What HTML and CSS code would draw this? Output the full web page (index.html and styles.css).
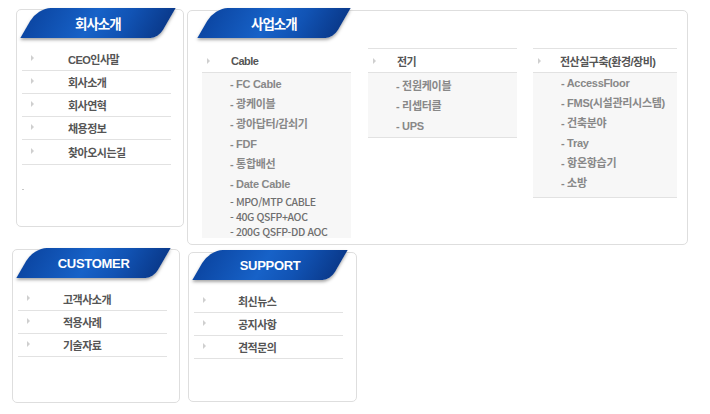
FILE: index.html
```html
<!DOCTYPE html>
<html lang="ko">

<head>
    <meta charset="UTF-8">
    <title>사이트맵</title>
    <link rel="stylesheet" href="styles.css">
</head>

<body>

    <div class="row row-top">
        <section class="box box-company">
            <div class="tab"><span>회사소개</span></div>
            <ul class="menu">
                <li><i class="arrow"></i>CEO인사말</li>
                <li><i class="arrow"></i>회사소개</li>
                <li><i class="arrow"></i>회사연혁</li>
                <li><i class="arrow"></i>채용정보</li>
                <li class="last"><i class="arrow"></i>찾아오시는길</li>
            </ul>
            <div class="dot"></div>
        </section>

        <section class="box box-business">
            <div class="tab tab-business"><span>사업소개</span></div>
            <div class="cols">
                <div class="col col-cable">
                    <div class="col-head no-top"><i class="arrow"></i>Cable</div>
                    <ul class="sub">
                        <li>- FC Cable</li>
                        <li>- 광케이블</li>
                        <li>- 광아답터/감쇠기</li>
                        <li>- FDF</li>
                        <li>- 통합배선</li>
                        <li>- Date Cable</li>
                        <li class="small">- MPO/MTP CABLE</li>
                        <li class="small">- 40G QSFP+AOC</li>
                        <li class="small">- 200G QSFP-DD AOC</li>
                    </ul>
                </div>
                <div class="col col-power">
                    <div class="col-head"><i class="arrow"></i>전기</div>
                    <ul class="sub">
                        <li>- 전원케이블</li>
                        <li>- 리셉터클</li>
                        <li>- UPS</li>
                    </ul>
                </div>
                <div class="col col-room">
                    <div class="col-head"><i class="arrow"></i>전산실구축(환경/장비)</div>
                    <ul class="sub">
                        <li>- AccessFloor</li>
                        <li>- FMS(시설관리시스템)</li>
                        <li>- 건축분야</li>
                        <li>- Tray</li>
                        <li>- 항온항습기</li>
                        <li>- 소방</li>
                    </ul>
                </div>
            </div>
        </section>
    </div>

    <div class="row row-bottom">
        <section class="box box-customer">
            <div class="tab"><span class="en">CUSTOMER</span></div>
            <ul class="menu">
                <li><i class="arrow"></i>고객사소개</li>
                <li><i class="arrow"></i>적용사례</li>
                <li><i class="arrow"></i>기술자료</li>
            </ul>
        </section>

        <section class="box box-support">
            <div class="tab"><span class="en">SUPPORT</span></div>
            <ul class="menu">
                <li><i class="arrow"></i>최신뉴스</li>
                <li><i class="arrow"></i>공지사항</li>
                <li><i class="arrow"></i>견적문의</li>
            </ul>
        </section>
    </div>

</body>

</html>
```

FILE: styles.css
```css
body {
    margin: 0;
    padding: 0;
    background-color: #fff;
    font-family: "Liberation Sans", "Noto Sans CJK KR", sans-serif;
    color: #555;
}

ul {
    list-style: none;
    margin: 0;
    padding: 0;
}

.row {
    display: flex;
    align-items: flex-start;
}

.row-top {
    padding-top: 9px;
}

.box {
    box-sizing: border-box;
    border: 1px solid #dedede;
    border-radius: 5px;
    background-color: #fff;
}

.box-company {
    width: 168px;
    height: 218px;
    margin-left: 16px;
}

.box-business {
    width: 501px;
    height: 235px;
    margin-left: 3px;
    margin-top: 1px;
}

.box-customer {
    width: 168px;
    height: 154px;
    margin-left: 12px;
    margin-top: 4px;
}

.box-support {
    width: 169px;
    height: 150px;
    margin-left: 8px;
    margin-top: 7px;
}

/* blue slanted title */
.tab {
    width: 138px;
    height: 30px;
    margin: -2px 0 0 12px;
    transform: skewX(-30deg);
    border-radius: 13px 0 8px 0;
    background: linear-gradient(90deg, #0c47a4 0%, #1762c8 45%, #1153b4 70%, #0a3a8c 100%);
    box-shadow: 1px 2px 3px rgba(0, 0, 0, 0.35);
    display: flex;
    justify-content: center;
    align-items: center;
}

.tab span {
    transform: skewX(30deg);
    color: #fff;
    font-size: 13.5px;
    font-weight: bold;
    letter-spacing: -1px;
}

.tab span.en {
    font-size: 13px;
    letter-spacing: -0.3px;
}

.tab-business {
    width: 136px;
    margin: -3px 0 0 18px;
}

.box-customer .tab {
    width: 137px;
}

.box-support .tab {
    margin-top: -3px;
}

.arrow {
    display: inline-block;
    width: 0;
    height: 0;
    border-top: 3px solid transparent;
    border-bottom: 3px solid transparent;
    border-left: 3px solid #cfcfcf;
}

/* side menus */
.menu {
    width: 149px;
    margin: 10px 0 0 5px;
}

.menu li {
    display: flex;
    align-items: center;
    height: 22px;
    border-bottom: 1px solid #e2e2e2;
    font-size: 11px;
    font-weight: bold;
    letter-spacing: -0.5px;
    color: #555;
}

.menu li.last {
    height: 24px;
}

.menu .arrow {
    margin: -2px 33px 0 9px;
}

.box-company .menu .arrow {
    margin-right: 34px;
}

.box-support .menu .arrow {
    margin-right: 32px;
}

.dot {
    width: 2px;
    height: 1px;
    margin: 24px 0 0 5px;
    background-color: #c8c8c8;
}

/* business columns */
.cols {
    display: flex;
    align-items: flex-start;
    margin: 10px 0 0 14px;
}

.col {
    width: 149px;
}

.col-power {
    margin-left: 17px;
}

.col-room {
    width: 144px;
    margin-left: 16px;
}

.col-head {
    display: flex;
    align-items: center;
    height: 23px;
    border-top: 1px solid #e2e2e2;
    border-bottom: 1px solid #e2e2e2;
    font-size: 11px;
    font-weight: bold;
    letter-spacing: -0.5px;
    color: #555;
}

.col-head.no-top {
    border-top-color: transparent;
}

.col-head .arrow {
    margin: 0 21px 0 5px;
}

.col-room .col-head .arrow {
    margin-right: 19px;
}

.sub {
    background-color: #f7f7f7;
    padding-left: 28px;
}

.sub li {
    line-height: 20px;
    font-size: 11px;
    font-weight: bold;
    letter-spacing: -0.3px;
    color: #888;
}

.sub li.small {
    line-height: 15px;
    font-family: "Noto Sans CJK KR", sans-serif;
    font-weight: 500;
    font-size: 10.5px;
    letter-spacing: -0.4px;
    color: #6f6f6f;
}

.col-cable .sub {
    padding-top: 1px;
    height: 165px;
    box-sizing: border-box;
}

.col-power .sub {
    padding-top: 3px;
    padding-bottom: 1px;
    border-bottom: 1px solid #e2e2e2;
}

.col-room .sub {
    padding-bottom: 4px;
    border-bottom: 1px solid #e2e2e2;
}
```
